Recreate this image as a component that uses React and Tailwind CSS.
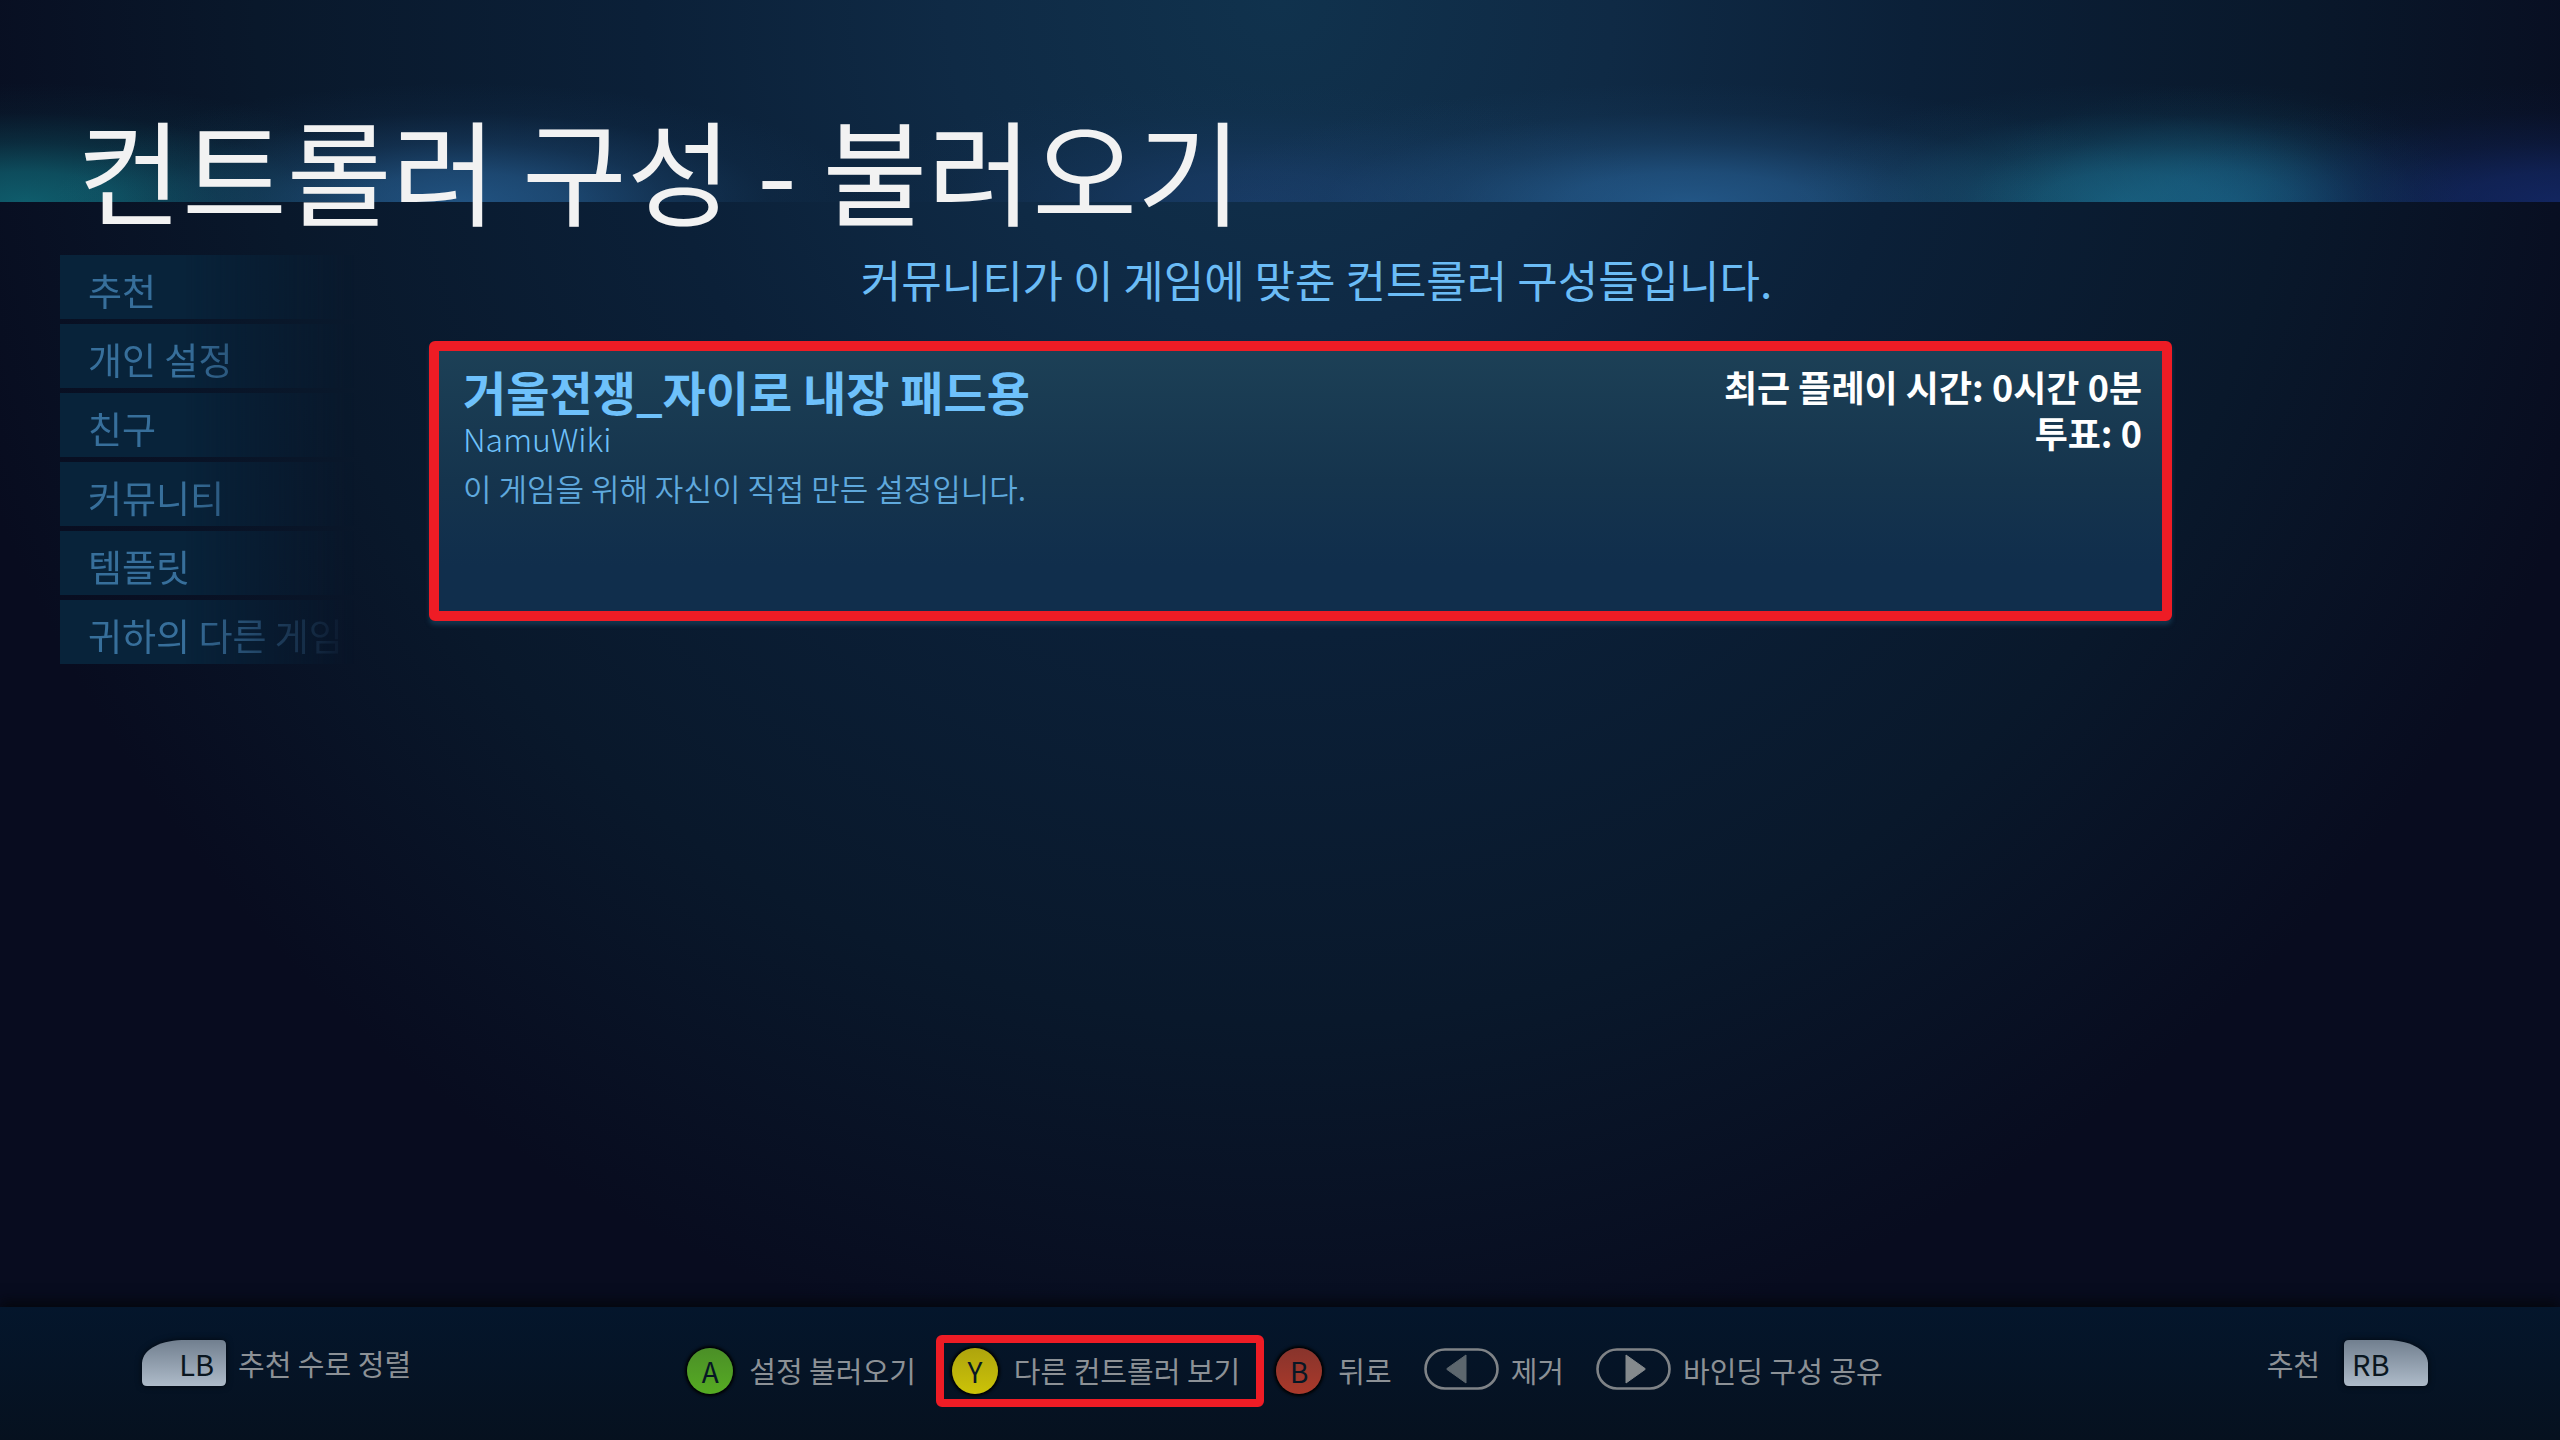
import clsx from 'clsx';

const TABS = ['추천', '개인 설정', '친구', '커뮤니티', '템플릿', '귀하의 다른 게임'];

const FACE = {
  green: 'bg-linear-to-b from-[#4b8f27] to-[#56ab22]',
  yellow: 'bg-linear-to-b from-[#aea40d] to-[#ccc307]',
  red: 'bg-linear-to-b from-[#88342c] to-[#aa392a]',
};

// soft coloured lights along the bottom edge of the header
const LIGHTS = [
  { x: 1, color: '#12808e', spread: 15 },
  { x: 18, color: '#2c6ca6', spread: 16 },
  { x: 49, color: '#1c4070', spread: 16 },
  { x: 66, color: '#2c6ca6', spread: 19 },
  { x: 83, color: '#1c7494', spread: 13 },
  { x: 87, color: '#1a6488', spread: 10 },
  { x: 100, color: '#17307c', spread: 16 },
];

function HeaderGlow() {
  return (
    <svg className="absolute inset-0 size-full" preserveAspectRatio="none" viewBox="0 0 100 200" aria-hidden="true">
      <defs>
        {LIGHTS.map((light) => (
          <radialGradient key={light.x} id={`light-${light.x}`}>
            <stop offset="0" stopColor={light.color} stopOpacity="0.68" />
            <stop offset="0.25" stopColor={light.color} stopOpacity="0.54" />
            <stop offset="0.5" stopColor={light.color} stopOpacity="0.25" />
            <stop offset="0.75" stopColor={light.color} stopOpacity="0.06" />
            <stop offset="1" stopColor={light.color} stopOpacity="0" />
          </radialGradient>
        ))}
      </defs>
      {LIGHTS.map((light) => (
        <ellipse key={light.x} cx={light.x} cy="200" rx={light.spread} ry="118" fill={`url(#light-${light.x})`} />
      ))}
    </svg>
  );
}

function FaceButton({ letter, color }) {
  return (
    <span
      className={clsx(
        'flex size-[46px] items-center justify-center rounded-full text-[28px] leading-none text-[#071725] shadow-[0_0_3px_2px_#000]',
        FACE[color],
      )}
    >
      {letter}
    </span>
  );
}

function Shoulder({ side }) {
  return (
    <svg width="84" height="46" viewBox="0 0 84 46" className="drop-shadow-[0_0_3px_#000a]" aria-hidden="true">
      <defs>
        <linearGradient id={`shoulder-${side}`} x1="0" y1="0" x2="0" y2="1">
          <stop offset="0" stopColor="#717f8f" />
          <stop offset="1" stopColor="#aebbc9" />
        </linearGradient>
      </defs>
      <path
        d="M44 0H79Q84 0 84 5V41Q84 46 79 46H5Q0 46 0 41V23C1 8 20 0 44 0Z"
        transform={side === 'right' ? 'translate(84 0) scale(-1 1)' : undefined}
        fill={`url(#shoulder-${side})`}
      />
    </svg>
  );
}

function ArrowPill({ direction }) {
  const left = direction === 'left';
  return (
    <svg width="75" height="42" viewBox="0 0 75 42" className="mb-1" aria-hidden="true">
      <rect x="1.5" y="1.5" width="72" height="39" rx="19.5" fill="none" stroke="#7f8387" strokeWidth="2.6" />
      <path
        d={left ? 'M42 7V35L23 21.5Q22 21 23 20.5Z' : 'M30 7V35L49 21.5Q50 21 49 20.5Z'}
        fill={left ? '#5d676e' : '#858a8d'}
        stroke={left ? '#5d676e' : '#858a8d'}
        strokeLinejoin="round"
      />
    </svg>
  );
}

function ConfigCard({ title, author, description, playtime, votes }) {
  return (
    <button
      type="button"
      className="flex h-[280px] w-full items-start justify-between rounded-md border-10 border-[#ee1c25] bg-linear-to-b from-[#1d4157] via-[#15344d] to-[#102e4c] to-80% bg-origin-border pt-3 pr-5 pl-6 text-left shadow-[0_4px_4px_#1a4560a0]"
    >
      <span className="flex flex-col">
        <span className="text-[47px] leading-[56px] font-bold text-[#6ec1fb]">{title}</span>
        <span className="text-[32px] leading-[38px] font-light text-[#6ec1fb]">{author}</span>
        <span className="mt-2 text-[31px] leading-[46px] font-[350] text-[#5fa9dd]">{description}</span>
      </span>
      <span className="flex flex-col text-right text-[36px] leading-[46px] font-bold text-white">
        <span>최근 플레이 시간: {playtime}</span>
        <span>투표: {votes}</span>
      </span>
    </button>
  );
}

function Action({ children, label, highlighted = false }) {
  return (
    <button type="button" className="relative flex h-[72px] items-center gap-4">
      {highlighted && (
        <span className="absolute inset-y-0 -right-6 -left-4 rounded-md border-8 border-[#ee1c25]" aria-hidden="true" />
      )}
      {children}
      <span className="pb-[2px]">{label}</span>
    </button>
  );
}

function PillAction({ direction, label }) {
  return (
    <button type="button" className="flex h-[72px] items-center gap-3">
      <ArrowPill direction={direction} />
      <span className="pb-[2px]">{label}</span>
    </button>
  );
}

export default function App() {
  return (
    <div className="relative flex min-h-screen flex-col bg-[#080c1f] bg-[radial-gradient(ellipse_54%_96%_at_50%_0%,#10324d_0%,#0f2a45_24%,#0b2038_46%,#09182b_74%,#080c1f_100%)] font-['Noto_Sans_CJK_KR','Noto_Sans',sans-serif]">
      <header className="relative h-[202px] pt-[88px] pl-[77px]">
        <HeaderGlow />
        <h1 className="relative text-[114px] leading-[160px] whitespace-nowrap text-[#f2f2f2]">
          컨트롤러 구성 - 불러오기
        </h1>
      </header>

      <main className="flex flex-1 items-start pt-[53px] pr-97 pl-[60px]">
        <nav className="flex w-[369px] shrink-0 flex-col gap-[5px]">
          {TABS.map((tab) => (
            <button
              key={tab}
              type="button"
              className="h-16 w-[310px] overflow-hidden bg-[#08233a] mask-[linear-gradient(to_right,#000_40%,transparent_95%)] pt-[5px] pl-7 text-left text-[37px] leading-[60px] whitespace-nowrap text-[#376f9b]"
            >
              {tab}
            </button>
          ))}
        </nav>

        <section className="min-w-0 flex-1">
          <p className="mb-[38px] pl-8 text-center text-[44px] leading-[48px] text-[#6bbcf6]">
            커뮤니티가 이 게임에 맞춘 컨트롤러 구성들입니다.
          </p>
          <ConfigCard
            title="거울전쟁_자이로 내장 패드용"
            author="NamuWiki"
            description="이 게임을 위해 자신이 직접 만든 설정입니다."
            playtime="0시간 0분"
            votes="0"
          />
        </section>
      </main>

      <footer className="grid h-[133px] grid-cols-[1fr_auto_1fr] items-start bg-linear-to-b from-[#04162c] to-[#06111f] pt-7 pr-[132px] pl-[142px] text-[29px] leading-10 whitespace-nowrap text-[#8c9196] shadow-[0_-6px_12px_#05070e]">
        <button type="button" className="flex h-14 items-center gap-3 justify-self-start">
          <span className="relative">
            <Shoulder side="left" />
            <span className="absolute inset-y-0 right-3 flex items-center text-[29px] text-[#0a1620]">LB</span>
          </span>
          <span>추천 수로 정렬</span>
        </button>

        <div className="flex gap-8">
          <div className="flex gap-9">
            <Action label="설정 불러오기">
              <FaceButton letter="A" color="green" />
            </Action>
            <Action label="다른 컨트롤러 보기" highlighted>
              <FaceButton letter="Y" color="yellow" />
            </Action>
            <Action label="뒤로">
              <FaceButton letter="B" color="red" />
            </Action>
          </div>
          <PillAction direction="left" label="제거" />
          <PillAction direction="right" label="바인딩 구성 공유" />
        </div>

        <button type="button" className="flex h-14 items-center gap-6 justify-self-end">
          <span>추천</span>
          <span className="relative">
            <Shoulder side="right" />
            <span className="absolute inset-y-0 left-2 flex items-center text-[29px] text-[#0a1620]">RB</span>
          </span>
        </button>
      </footer>
    </div>
  );
}
